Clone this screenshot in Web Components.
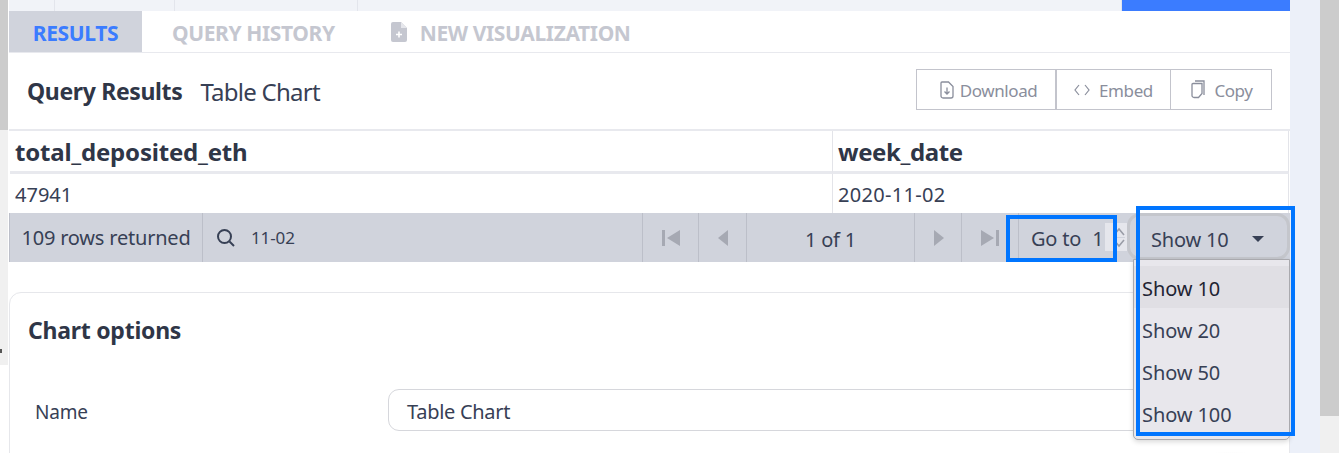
<!DOCTYPE html>
<html>
<head>
<meta charset="utf-8">
<title>Query Results</title>
<style>
  html, body { margin: 0; height: 453px; overflow: hidden; background: #fff; }
  body { font-family: "Noto Sans", "Open Sans", sans-serif; color: #374055; }
</style>
</head>
<body>
<app-shell>
  <top-strip></top-strip>
  <tab-bar></tab-bar>
  <query-header></query-header>
  <result-table></result-table>
  <table-toolbar></table-toolbar>
  <chart-options></chart-options>
</app-shell>

<script>
(function() {
  'use strict';

  function define(name, html) {
    customElements.define(name, class extends HTMLElement {
      constructor() {
        super();
        this.attachShadow({mode: 'open'}).innerHTML = html;
      }
    });
  }

  define('app-shell', `
    <style>
      :host { display: grid; grid-template-columns: 9px 1281px 30px 19px; height: 453px; position: relative; overflow: hidden; }
      #gutter { display: grid; grid-template-rows: 130px 235px 1fr; width: 8px; }
      #gutter div:nth-child(1) { background: #cccccc; }
      #gutter div:nth-child(2) { background: #f0f0f0; }
      #strip { background: #ecf0f9; }
      #scroll { display: grid; grid-template-rows: 416px 1fr; }
      #scroll div:nth-child(1) { background: #cccccc; }
      #scroll div:nth-child(2) { background: #f0f0f0; }
      #main { min-width: 0; position: relative; }
      #dot { position: absolute; left: 0; top: 349px; width: 2px; height: 4px; background: #555; }
    </style>
    <div id="gutter"><div></div><div></div><div></div></div>
    <div id="main"><slot></slot></div>
    <div id="strip"></div>
    <div id="scroll"><div></div><div></div></div>
    <div id="dot"></div>
  `);

  define('top-strip', `
    <style>
      :host { display: grid; grid-template-columns: 46px 120px 183px 188px 1fr 168px; height: 11px; background: #f1f3f8; }
      div { border-right: 1px solid #e3e5ec; }
      div:last-child { background: #3b7cff; border: 0; }
      div:nth-child(5) { border: 0; }
    </style>
    <div></div><div></div><div></div><div></div><div></div><div></div>
  `);

  define('tab-bar', `
    <style>
      :host { display: flex; height: 41px; border-bottom: 1px solid #e8e9ee; font-size: 21px; font-weight: 700; color: #c5c7d0; letter-spacing: -0.38px; }
      span { display: flex; align-items: center; gap: 13px; white-space: nowrap; box-sizing: border-box; padding-top: 3px; }
      #results { width: 133px; justify-content: center; background: #d0d3dc; color: #3b7cff; }
      #history { margin-left: 30px; }
      #visual { margin-left: 56px; }
      svg { width: 16px; height: 20px; margin-top: -3px; }
    </style>
    <span id="results">RESULTS</span>
    <span id="history">QUERY HISTORY</span>
    <span id="visual">
      <svg viewBox="0 0 16 20"><path d="M2 0h8l6 6v12a2 2 0 0 1-2 2H2a2 2 0 0 1-2-2V2a2 2 0 0 1 2-2z" fill="#c5c7d0"/><path d="M10 0v6h6z" fill="#e6e7ec"/><path d="M8 9.500v6M5 12.500h6" stroke="#fff" stroke-width="1.6"/></svg>
      NEW VISUALIZATION
    </span>
  `);

  const btnIcons = {
    download: '<svg width="14" height="18" viewBox="0 0 14 18" fill="none" stroke="#8a8e9c" stroke-width="1.3"><path d="M2 1h6.500L13 5.500V15a2 2 0 0 1-2 2H3a2 2 0 0 1-2-2V2a1 1 0 0 1 1-1z"/><path d="M7 6.500v6M4.500 10.500L7 13l2.500-2.500"/></svg>',
    embed: '<svg width="16" height="12" viewBox="0 0 16 12" fill="none" stroke="#8a8e9c" stroke-width="1.2"><path d="M5 1L1 6l4 5M11 1l4 5-4 5"/></svg>',
    copy: '<svg width="14" height="19" viewBox="0 0 14 19" fill="none" stroke="#8a8e9c" stroke-width="1.3"><path d="M4 1h9v14"/><path d="M2 3.500h9v10l-3.500 4H3a2 2 0 0 1-2-2V4.500a1 1 0 0 1 1-1z"/></svg>'
  };

  define('query-header', `
    <style>
      :host { display: flex; align-items: center; height: 76px; padding: 0 18px; border-bottom: 2px solid #e8e9ee; }
      h2 { margin: 0; font-size: 23px; font-weight: 700; letter-spacing: -0.35px; color: #2f3647; }
      #name { margin-left: 18px; font-size: 24px; letter-spacing: -0.75px; color: #374055; }
      #btns { display: grid; grid-template-columns: 138px 115px 101px; margin: 0 0 3px auto; height: 41px; box-sizing: border-box; border: 1px solid #c3c4cc; }
      #btns div { display: flex; align-items: center; justify-content: center; gap: 9px; font-size: 17px; color: #8a8e9c; letter-spacing: -0.4px; border-left: 1px solid #c3c4cc; padding: 1px 0 0 2px; }
      #btns div:first-child { border-left: 0; gap: 6px; padding-left: 5px; }
      #btns div:nth-child(2) { border-left-width: 2px; padding-right: 2px; }
      svg { margin-top: -1px; }
    </style>
    <h2>Query Results</h2><span id="name">Table Chart</span>
    <div id="btns">
      <div>${btnIcons.download}Download</div>
      <div>${btnIcons.embed}Embed</div>
      <div>${btnIcons.copy}Copy</div>
    </div>
  `);

  define('result-table', `
    <style>
      :host { display: grid; grid-template-columns: 823px 456px; grid-template-rows: 43px 39px; margin-left: 1px; width: 1280px; font-size: 20px; }
      div { display: flex; align-items: center; padding: 2px 0 0 5px; box-sizing: border-box; }
      .h { font-size: 24px; font-weight: 700; color: #2f3647; border-bottom: 3px solid #e8e9ee; letter-spacing: -0.2px; padding-top: 0; }
      .c, .r { border-right: 1px solid #e3e4e9; }
      #week { letter-spacing: -0.4px; }
      #date { letter-spacing: 0.3px; }
    </style>
    <div class="h c">total_deposited_eth</div><div class="h r" id="week">week_date</div>
    <div class="c">47941</div><div class="r" id="date">2020-11-02</div>
  `);

  const tri = (d) => `<svg width="22" height="18" viewBox="0 0 22 18" fill="#a6a9b3"><path d="${d}"/></svg>`;

  define('table-toolbar', `
    <style>
      :host { display: grid; grid-template-columns: 193px 440px 56px 48px 168px 47px 57px 109px 161px; height: 49px; background: #d0d3dc; font-size: 20px; letter-spacing: -0.2px; position: relative; }
      .cell { display: flex; align-items: center; justify-content: center; border-left: 1px solid #bcbfc9; white-space: nowrap; }
      .cell:first-child { border: 0; justify-content: flex-start; padding: 0 0 2px 13px; }
      #search { justify-content: flex-start; padding-left: 13px; font-size: 17px; letter-spacing: -0.1px; gap: 15px; }
      #page { padding-top: 3px; }
      #goto { justify-content: flex-start; padding: 2px 0 0 12px; gap: 11px; position: relative; }
      #spin { position: absolute; left: 86px; top: 10px; width: 22px; height: 28px; background: #e5e6ec; display: flex; align-items: center; justify-content: flex-end; padding-right: 2px; box-sizing: border-box; }
      #ring { border: 0; position: relative; }
      #ringbox { position: absolute; left: 0; top: 0; right: -2px; height: 47px; box-sizing: border-box; border: 3px solid #c4c6cc; border-radius: 13px; display: flex; align-items: center; justify-content: space-between; padding: 5px 23px 0 21px; }
      #caret { width: 0; height: 0; border-left: 6.500px solid transparent; border-right: 6.500px solid transparent; border-top: 6.500px solid #374055; margin: 0; }
      #menu { position: absolute; left: 1124px; top: 46px; width: 157px; height: 181px; box-sizing: border-box; background: #e8e7ec; border: 1px solid #a9a9ae; border-radius: 0 0 5px 5px; padding-top: 6px; font-size: 20px; letter-spacing: -0.1px; box-shadow: 0 2px 5px rgba(0,0,0,.15); z-index: 2; }
      #menu div { height: 42px; box-sizing: border-box; display: flex; align-items: center; padding: 2px 0 0 8px; }
      #menu div:first-child { background: #e0dfe4; color: #1f2433; }
      .mark { position: absolute; box-sizing: border-box; border: 4px solid #0075ff; z-index: 3; pointer-events: none; }
      #mark1 { left: 997px; top: 2px; width: 111px; height: 47px; }
      #mark2 { left: 1127px; top: -7px; width: 159px; height: 230px; }
    </style>
    <div class="cell">109 rows returned</div>
    <div class="cell" id="search">
      <svg width="20" height="20" viewBox="0 0 20 20" fill="none" stroke="#374055" stroke-width="2"><circle cx="8.500" cy="8.500" r="6.500"/><path d="M13.500 13.500L18 18"/></svg>
      <span>11-02</span>
    </div>
    <div class="cell">${tri('M2 1h3v16H2zM20 1v16L7 9z')}</div>
    <div class="cell">${tri('M16 1v16L6 9z')}</div>
    <div class="cell" id="page">1 of 1</div>
    <div class="cell">${tri('M7 1v16l10-8z')}</div>
    <div class="cell">${tri('M2 1v16l13-8zM17 1h3v16h-3z')}</div>
    <div class="cell" id="goto"><span>Go to</span><span>1</span>
      <span id="spin"><svg width="12" height="24" viewBox="0 0 12 24" fill="none" stroke="#9a9da7" stroke-width="1.6"><path d="M1 10l5-6 5 6M1 15l5 6 5-6"/><path d="M-8 12.500h20" stroke="#d0d3dc" stroke-width="1"/></svg></span>
    </div>
    <div class="cell" id="ring"><div id="ringbox"><span>Show 10</span><span id="caret"></span></div></div>
    <div id="menu"><div>Show 10</div><div>Show 20</div><div>Show 50</div><div>Show 100</div></div>
    <div class="mark" id="mark1"></div>
    <div class="mark" id="mark2"></div>
  `);

  define('chart-options', `
    <style>
      :host { display: block; margin-top: 30px; height: 170px; box-sizing: border-box; border: 1px solid #e6e7eb; border-radius: 12px 12px 0 0; padding: 21px 18px 0 18px; position: relative; }
      h3 { margin: 0; font-size: 23px; font-weight: 700; color: #2f3647; letter-spacing: -0.25px; line-height: 32px; }
      #row { display: grid; grid-template-columns: 360px 1fr; align-items: center; margin-top: 43px; }
      label { padding: 3px 0 0 7px; font-size: 19px; letter-spacing: -0.2px; }
      #input { height: 42px; box-sizing: border-box; border: 1px solid #d6d7dc; border-radius: 11px; padding: 2px 0 0 18px; display: flex; align-items: center; font-size: 20px; letter-spacing: -0.3px; }
      #shade { position: absolute; right: -1px; bottom: 0; width: 120px; height: 9px; background: radial-gradient(ellipse at 50% 100%, rgba(0,0,0,.15), rgba(0,0,0,0) 70%); }
    </style>
    <h3>Chart options</h3>
    <div id="row"><label>Name</label><div id="input">Table Chart</div></div>
    <div id="shade"></div>
  `);
})();
</script>
</body>
</html>
